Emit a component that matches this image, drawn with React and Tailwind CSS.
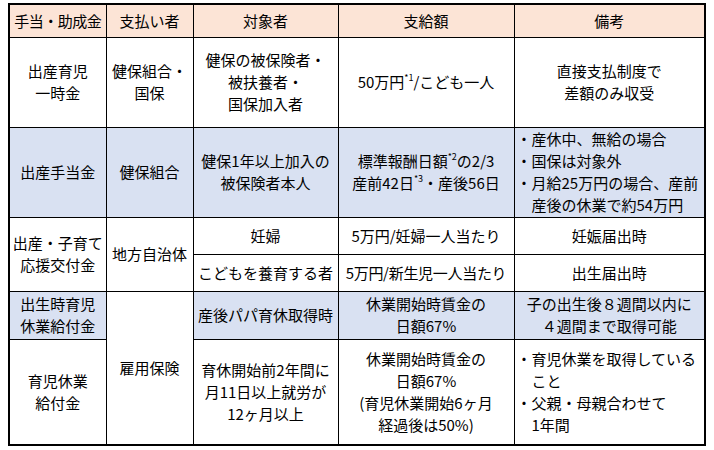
import React from "react";

const font = { fontFamily: '"Noto Sans CJK JP", "Noto Sans", sans-serif' };

const Cell = ({ children, className = "", ...rest }) => (
  <td
    className={`border border-black text-center align-middle whitespace-nowrap px-0 py-0 ${className}`}
    {...rest}
  >
    {children}
  </td>
);

const Sup = ({ children }) => (
  <sup className="text-[9px] relative -top-[1px] align-super">{children}</sup>
);

const Lines = ({ items }) => (
  <div className="flex flex-col items-center">
    {items.map((t, i) => (
      <span key={i}>{t}</span>
    ))}
  </div>
);

const Bullets = ({ items }) => (
  <div className="flex flex-col pl-[2px] text-left">
    {items.map((b, i) => (
      <div key={i} className="flex">
        <span className="w-[15px] shrink-0">・</span>
        <div className="flex flex-col">
          {b.map((t, j) => (
            <span key={j}>{t}</span>
          ))}
        </div>
      </div>
    ))}
  </div>
);

export default function App() {
  const peach = "bg-[#fce4d6]";
  const blue = "bg-[#d9e1f2]";
  return (
    <div className="w-[714px] h-[450px] bg-white pt-[3px] pl-[8px]" style={font}>
      <table className="table-fixed border-collapse border-2 border-black text-[15px] leading-[22px] text-black w-[696px]">
        <colgroup>
          <col className="w-[97px]" />
          <col className="w-[87px]" />
          <col className="w-[145px]" />
          <col className="w-[176px]" />
          <col className="w-[191px]" />
        </colgroup>
        <tbody>
          <tr className={`h-[33px] ${peach}`}>
            <Cell className="tracking-[-0.5px]">手当・助成金</Cell>
            <Cell>支払い者</Cell>
            <Cell>対象者</Cell>
            <Cell>支給額</Cell>
            <Cell>備考</Cell>
          </tr>
          <tr className="h-[90px]">
            <Cell>
              <Lines items={["出産育児", "一時金"]} />
            </Cell>
            <Cell>
              <Lines items={["健保組合・", "国保"]} />
            </Cell>
            <Cell>
              <Lines items={["健保の被保険者・", "被扶養者・", "国保加入者"]} />
            </Cell>
            <Cell>
              50万円<Sup>*1</Sup>/こども一人
            </Cell>
            <Cell>
              <Lines items={["直接支払制度で", "差額のみ収受"]} />
            </Cell>
          </tr>
          <tr className={`h-[90px] ${blue}`}>
            <Cell>出産手当金</Cell>
            <Cell>健保組合</Cell>
            <Cell>
              <Lines items={["健保1年以上加入の", "被保険者本人"]} />
            </Cell>
            <Cell>
              <div className="flex flex-col items-center">
                <span>
                  標準報酬日額<Sup>*2</Sup>の2/3
                </span>
                <span>
                  産前42日<Sup>*3</Sup>・産後56日
                </span>
              </div>
            </Cell>
            <Cell>
              <Bullets
                items={[
                  ["産休中、無給の場合"],
                  ["国保は対象外"],
                  ["月給25万円の場合、産前", "産後の休業で約54万円"],
                ]}
              />
            </Cell>
          </tr>
          <tr className="h-[37px]">
            <Cell rowSpan={2}>
              <Lines items={["出産・子育て", "応援交付金"]} />
            </Cell>
            <Cell rowSpan={2}>地方自治体</Cell>
            <Cell>妊婦</Cell>
            <Cell>5万円/妊婦一人当たり</Cell>
            <Cell>妊娠届出時</Cell>
          </tr>
          <tr className="h-[37px]">
            <Cell>こどもを養育する者</Cell>
            <Cell className="tracking-[-0.3px]">5万円/新生児一人当たり</Cell>
            <Cell>出生届出時</Cell>
          </tr>
          <tr className="h-[48px]">
            <Cell className={blue}>
              <Lines items={["出生時育児", "休業給付金"]} />
            </Cell>
            <Cell rowSpan={2}>雇用保険</Cell>
            <Cell className={blue}>産後パパ育休取得時</Cell>
            <Cell className={blue}>
              <Lines items={["休業開始時賃金の", "日額67%"]} />
            </Cell>
            <Cell className={blue}>
              <Lines items={["子の出生後８週間以内に", "４週間まで取得可能"]} />
            </Cell>
          </tr>
          <tr className="h-[106px]">
            <Cell>
              <Lines items={["育児休業", "給付金"]} />
            </Cell>
            <Cell>
              <Lines items={["育休開始前2年間に", "月11日以上就労が", "12ヶ月以上"]} />
            </Cell>
            <Cell>
              <Lines
                items={["休業開始時賃金の", "日額67%", "(育児休業開始6ヶ月", "経過後は50%)"]}
              />
            </Cell>
            <Cell>
              <Bullets
                items={[
                  ["育児休業を取得している", "こと"],
                  ["父親・母親合わせて", "1年間"],
                ]}
              />
            </Cell>
          </tr>
        </tbody>
      </table>
    </div>
  );
}
